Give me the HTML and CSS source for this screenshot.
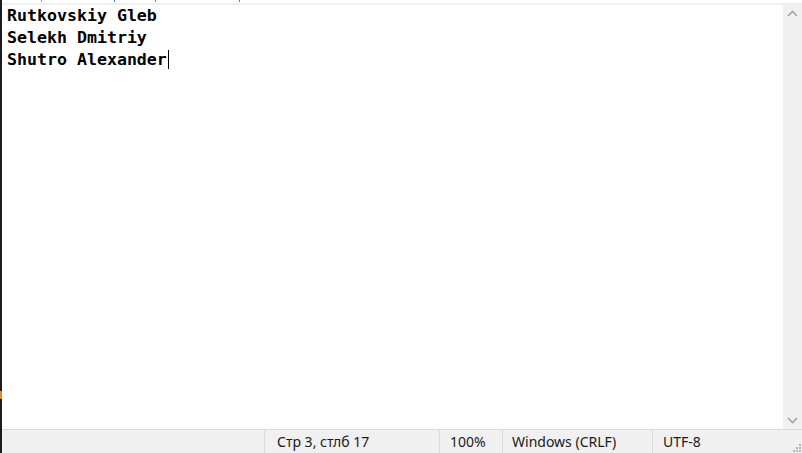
FILE: index.html
```html
<!DOCTYPE html>
<html lang="ru">
<head>
<meta charset="utf-8">
<title>Блокнот</title>
<link rel="stylesheet" href="styles.css">
</head>
<body>
<div class="window">
  <div class="edge"><span class="edge-mark"></span></div>
  <div class="frame">
    <div class="menu-remnant">
      <span class="speck s1"></span><span class="speck s2"></span><span class="speck s3"></span><span class="speck s4"></span>
    </div>
    <div class="menu-line"></div>
    <div class="main">
      <div class="editor">
        <div class="line">Rutkovskiy Gleb</div>
        <div class="line">Selekh Dmitriy</div>
        <div class="line">Shutro Alexander<span class="caret"></span></div>
      </div>
      <div class="scrollbar">
        <svg class="arrow" width="19" height="17" viewBox="0 0 19 17"><path d="M5 11 L9.5 6.5 L14 11" fill="none" stroke="#a3a3a3" stroke-width="1.6"/></svg>
        <div class="track"></div>
        <svg class="arrow" width="19" height="17" viewBox="0 0 19 17"><path d="M5 6 L9.5 10.5 L14 6" fill="none" stroke="#a3a3a3" stroke-width="1.6"/></svg>
      </div>
    </div>
    <div class="status">
      <div class="cell blank"></div>
      <div class="cell pos">Стр 3, стлб 17</div>
      <div class="cell zoom">100%</div>
      <div class="cell eol">Windows (CRLF)</div>
      <div class="cell enc">UTF-8</div>
      <svg class="grip" width="8" height="8" viewBox="0 0 8 8">
        <rect x="6" y="0" width="2" height="2" fill="#b5b5b5"/>
        <rect x="3" y="3" width="2" height="2" fill="#b5b5b5"/>
        <rect x="6" y="3" width="2" height="2" fill="#b5b5b5"/>
        <rect x="0" y="6" width="2" height="2" fill="#b5b5b5"/>
        <rect x="3" y="6" width="2" height="2" fill="#b5b5b5"/>
        <rect x="6" y="6" width="2" height="2" fill="#b5b5b5"/>
      </svg>
    </div>
  </div>
</div>
</body>
</html>
```
FILE: styles.css
```css
html, body {
  margin: 0;
  padding: 0;
  background: #ffffff;
}
.window {
  display: flex;
  width: 802px;
  height: 453px;
  overflow: hidden;
}
.edge {
  width: 2px;
  background: #1c1c1c;
  display: flex;
  flex-direction: column;
  padding-top: 391px;
  box-sizing: border-box;
}
.edge-mark {
  display: block;
  height: 8px;
  background: #e08a2e;
}
.frame {
  flex: 1;
  display: flex;
  flex-direction: column;
  min-width: 0;
}
.menu-remnant {
  height: 3px;
  background: #ffffff;
  display: flex;
}
.speck {
  display: block;
  width: 1px;
  height: 2px;
  background: #3a86d9;
}
.s1 { margin-left: 39px; background: #e0902e; }
.s2 { margin-left: 72px; }
.s3 { margin-left: 40px; }
.s4 { margin-left: 83px; }
.menu-line {
  height: 2px;
  background: #f0f0f0;
}
.main {
  flex: 1;
  display: flex;
  min-height: 0;
}
.editor {
  flex: 1;
  padding: 0 0 0 5px;
  font-family: "DejaVu Sans Mono", "Liberation Mono", monospace;
  font-weight: bold;
  font-size: 16.6px;
  line-height: 22px;
  color: #000000;
}
.line {
  white-space: pre;
  height: 22px;
  letter-spacing: 0;
}
.caret {
  display: inline-block;
  width: 1px;
  height: 19px;
  background: #000;
  vertical-align: -4px;
  margin-left: 1px;
}
.scrollbar {
  width: 19px;
  background: #f0f0f0;
  display: flex;
  flex-direction: column;
}
.arrow {
  display: block;
}
.track {
  flex: 1;
}
.status {
  height: 24px;
  box-sizing: border-box;
  border-top: 1px solid #d9d9d9;
  background: #f0f0f0;
  display: flex;
  align-items: stretch;
  font-family: "Noto Sans", "Open Sans", sans-serif;
  font-size: 14px;
  color: #1a1a1a;
  position: relative;
}
.cell {
  display: flex;
  align-items: center;
  border-left: 1px solid #d9d9d9;
  box-sizing: border-box;
  white-space: nowrap;
}
.cell.blank {
  width: 262px;
  border-left: none;
}
.pos { width: 175px; padding-left: 12px; }
.zoom { width: 63px; padding-left: 10px; }
.eol { width: 150px; padding-left: 9px; }
.enc { flex: 1; padding-left: 10px; }
.grip {
  position: absolute;
  right: 1px;
  bottom: 1px;
}
```
